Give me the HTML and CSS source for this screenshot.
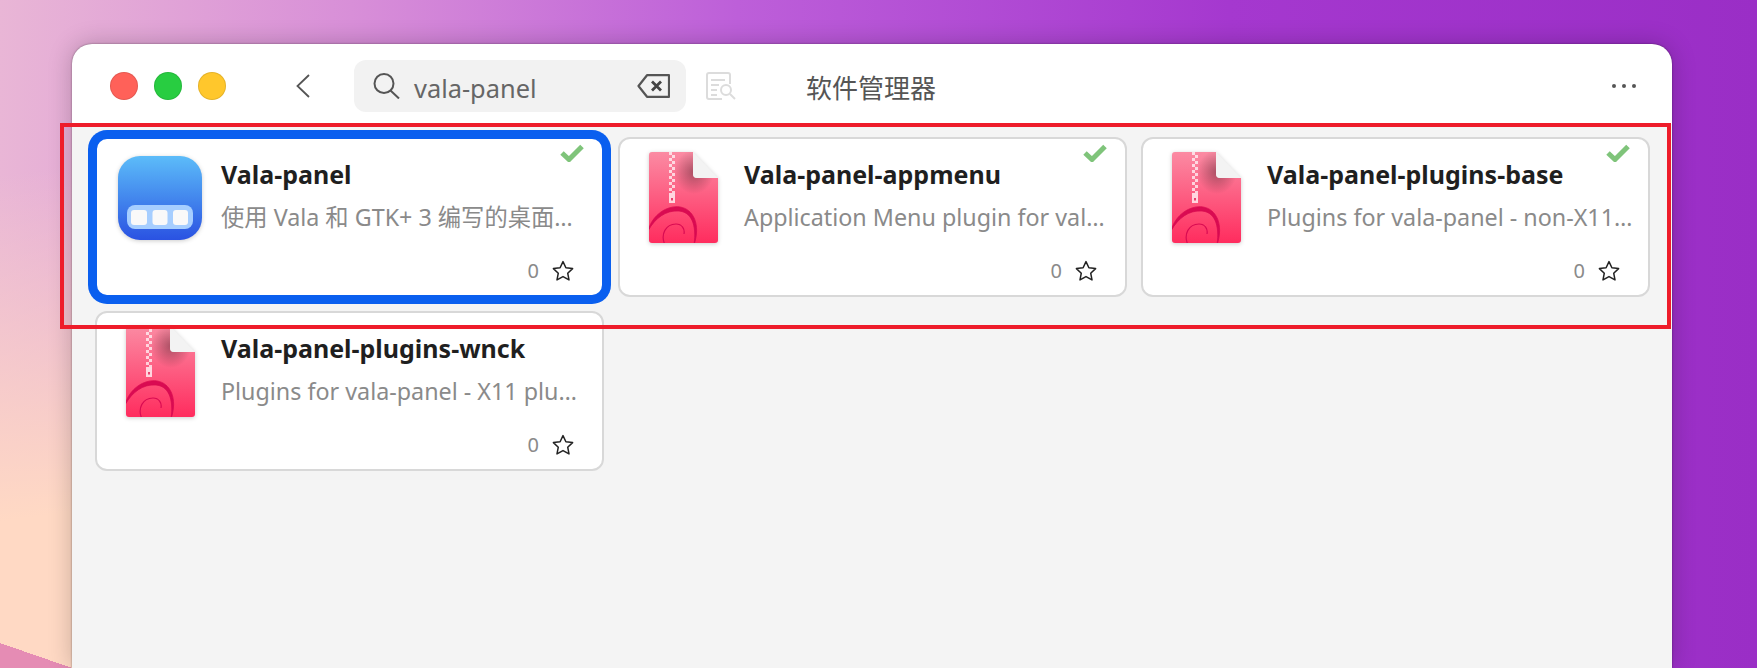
FILE: index.html
```html
<!DOCTYPE html>
<html lang="zh-CN">
<head>
  <meta charset="UTF-8" />
  <meta name="viewport" content="width=device-width, initial-scale=1.0"/>
  <title>软件管理器</title>
  <link rel="stylesheet" href="styles.css">
</head>
<body>

  <svg class="defs" width="0" height="0">
    <defs>
      <linearGradient id="deb-fill" x1="0" y1="0" x2="0" y2="1">
        <stop offset="0" stop-color="#fb8ba3"/>
        <stop offset="1" stop-color="#ff2c5e"/>
      </linearGradient>
      <radialGradient id="fold-shade" cx="0.5" cy="0.5" r="0.5">
        <stop offset="0" stop-color="#000" stop-opacity="0.32"/>
        <stop offset="1" stop-color="#000" stop-opacity="0"/>
      </radialGradient>
      <linearGradient id="app-fill" x1="0" y1="0" x2="0" y2="1">
        <stop offset="0" stop-color="#5cbcf9"/>
        <stop offset="1" stop-color="#2a52e2"/>
      </linearGradient>
      <clipPath id="deb-clip">
        <path d="M3 0H44V22Q44 26 48 26H69V88Q69 91 66 91H3Q0 91 0 88V3Q0 0 3 0Z"/>
      </clipPath>
      <symbol id="deb" viewBox="0 0 69 91">
        <path d="M3 0H44V22Q44 26 48 26H69V88Q69 91 66 91H3Q0 91 0 88V3Q0 0 3 0Z" fill="url(#deb-fill)"/>
        <g clip-path="url(#deb-clip)">
          <ellipse cx="45" cy="20" rx="20" ry="22" fill="url(#fold-shade)"/>
          <path d="M-1 79C3 63 18 53 31 55C44 57 52 72 45 93C48 72 42 60 30 59C17 58 6 66 -1 79Z" fill="#d90b52" stroke="#d90b52" stroke-width="0.800"/>
          <path d="M16 93C11 82 17 72 27 72C33 72 36 77 35 82" fill="none" stroke="#d90b52" stroke-width="1.200"/>
          <path d="M21.500 0V41M24.500 3V41" fill="none" stroke="#fff" stroke-opacity="0.7" stroke-width="3" stroke-dasharray="3 3"/>
        </g>
        <rect x="20" y="41" width="6" height="10" fill="#fff" fill-opacity="0.75"/>
        <rect x="22" y="46" width="2" height="2.500" fill="#e8436f"/>
        <path d="M44 0L69 26H48Q44 26 44 22Z" fill="#f3f3f3"/>
      </symbol>
      <symbol id="star" viewBox="0 0 22 22">
        <path d="M11 1.600L13.900 7.800L20.600 8.600L15.700 13.200L17 19.900L11 16.600L5 19.900L6.300 13.200L1.400 8.600L8.100 7.800Z" fill="none" stroke="#222" stroke-width="1.500" stroke-linejoin="round"/>
      </symbol>
      <symbol id="check" viewBox="0 0 24 18">
        <path d="M2 9L9 15.500L22 2.500" fill="none" stroke="#7fc47a" stroke-width="5"/>
      </symbol>
    </defs>
  </svg>

  <div class="window">
    <div class="titlebar">
      <div class="traffic">
        <span class="light light-red"></span>
        <span class="light light-green"></span>
        <span class="light light-yellow"></span>
      </div>
      <svg class="back" width="14" height="24" viewBox="0 0 14 24">
        <path d="M13 1L1.500 12L13 23" fill="none" stroke="#555" stroke-width="1.800"/>
      </svg>
      <div class="search-box">
        <svg class="search-icon" width="27" height="26" viewBox="0 0 27 26">
          <circle cx="11" cy="10.500" r="9.500" fill="none" stroke="#555" stroke-width="2"/>
          <path d="M17.500 17.500L26 25.500" fill="none" stroke="#555" stroke-width="2"/>
        </svg>
        <div class="search-text">vala-panel</div>
        <svg class="clear-icon" width="33" height="24" viewBox="0 0 33 24">
          <path d="M10 1.200H32V22.800H10L1.500 12Z" fill="none" stroke="#555" stroke-width="2.200" stroke-linejoin="round"/>
          <path d="M15 7.500L24 16.500M24 7.500L15 16.500" fill="none" stroke="#444" stroke-width="2.800"/>
        </svg>
      </div>
      <svg class="file-search" width="30" height="28" viewBox="0 0 30 28">
        <path d="M24 12V3Q24 1 22 1H3Q1 1 1 3V25Q1 27 3 27H16" fill="none" stroke="#dcdcdc" stroke-width="2"/>
        <path d="M5 8H19M5 13H13M5 18H11M5 23H11" fill="none" stroke="#dcdcdc" stroke-width="2"/>
        <circle cx="20" cy="18" r="5" fill="none" stroke="#dcdcdc" stroke-width="2"/>
        <path d="M24 22L29 27" fill="none" stroke="#dcdcdc" stroke-width="2"/>
      </svg>
      <div class="app-title">软件管理器</div>
      <div class="more">
        <span class="dot"></span>
        <span class="dot"></span>
        <span class="dot"></span>
      </div>
    </div>

    <div class="content">
      <div class="card card-selected">
        <svg class="check" width="24" height="18"><use href="#check"/></svg>
        <div class="icon-slot">
          <svg class="app-icon" width="84" height="84" viewBox="0 0 84 84">
            <rect width="84" height="84" rx="22" fill="url(#app-fill)"/>
            <rect x="9" y="49" width="66" height="24" rx="8" fill="#a6ceff"/>
            <rect x="13" y="54" width="16" height="15" rx="3" fill="#f9f9f9"/>
            <rect x="34.500" y="54" width="15" height="15" rx="3" fill="#f9f9f9"/>
            <rect x="55" y="54" width="15" height="15" rx="3" fill="#f9f9f9"/>
          </svg>
        </div>
        <div class="card-body">
          <div class="pkg-name">Vala-panel</div>
          <div class="pkg-desc">使用 Vala 和 GTK+ 3 编写的桌面…</div>
          <div class="card-footer">
            <span class="count">0</span>
            <svg class="star" width="22" height="22"><use href="#star"/></svg>
          </div>
        </div>
      </div>

      <div class="card">
        <svg class="check" width="24" height="18"><use href="#check"/></svg>
        <div class="icon-slot">
          <svg class="deb-icon" width="69" height="91"><use href="#deb"/></svg>
        </div>
        <div class="card-body">
          <div class="pkg-name">Vala-panel-appmenu</div>
          <div class="pkg-desc">Application Menu plugin for val…</div>
          <div class="card-footer">
            <span class="count">0</span>
            <svg class="star" width="22" height="22"><use href="#star"/></svg>
          </div>
        </div>
      </div>

      <div class="card">
        <svg class="check" width="24" height="18"><use href="#check"/></svg>
        <div class="icon-slot">
          <svg class="deb-icon" width="69" height="91"><use href="#deb"/></svg>
        </div>
        <div class="card-body">
          <div class="pkg-name">Vala-panel-plugins-base</div>
          <div class="pkg-desc">Plugins for vala-panel - non-X11…</div>
          <div class="card-footer">
            <span class="count">0</span>
            <svg class="star" width="22" height="22"><use href="#star"/></svg>
          </div>
        </div>
      </div>

      <div class="card">
        <div class="icon-slot">
          <svg class="deb-icon" width="69" height="91"><use href="#deb"/></svg>
        </div>
        <div class="card-body">
          <div class="pkg-name">Vala-panel-plugins-wnck</div>
          <div class="pkg-desc">Plugins for vala-panel - X11 plu…</div>
          <div class="card-footer">
            <span class="count">0</span>
            <svg class="star" width="22" height="22"><use href="#star"/></svg>
          </div>
        </div>
      </div>
    </div>
  </div>

  <div class="annotation"></div>

</body>
</html>
```

FILE: styles.css
```css
html, body {
  height: 100%;
}
body {
  margin: 0;
  padding: 44px 85px 0 72px;
  box-sizing: border-box;
  overflow: hidden;
  position: relative;
  font-family: "Noto Sans", "Noto Sans CJK SC", sans-serif;
  background-color: #d9a0dc;
  background-image:
    linear-gradient(to top right, #e58cb4 50%, transparent 50%),
    linear-gradient(172deg, rgba(255, 217, 196, 0) 25%, #ffd9c4 75%),
    linear-gradient(90deg, #e9b6d6 0%, #d88fd8 20%, #bd5fd9 42%, #a538cf 70%, #9a2ec6 100%);
  background-repeat: no-repeat;
  background-size: 72px 25px, 200px 100%, 100% 100%;
  background-position: 0 643px, 0 0, 0 0;
}
.defs {
  position: absolute;
}
.window {
  height: 100%;
  display: flex;
  flex-direction: column;
  background-color: #fff;
  border-radius: 20px 20px 0 0;
  box-shadow: 0 0 24px rgba(0, 0, 0, 0.22), 0 0 2px rgba(0, 0, 0, 0.45);
}
.titlebar {
  height: 80px;
  flex: none;
  display: flex;
  align-items: center;
  padding: 4px 36px 0 38px;
  box-sizing: border-box;
}
.traffic {
  display: flex;
  gap: 16px;
}
.light {
  width: 28px;
  height: 28px;
  border-radius: 14px;
  box-sizing: border-box;
  border: 1px solid rgba(0, 0, 0, 0.1);
}
.light-red {
  background-color: #ff6159;
}
.light-green {
  background-color: #28cd41;
}
.light-yellow {
  background-color: #ffc72c;
}
.back {
  margin-left: 70px;
}
.search-box {
  width: 332px;
  height: 52px;
  margin-left: 44px;
  display: flex;
  align-items: center;
  padding: 0 16px 0 19px;
  box-sizing: border-box;
  background-color: #f2f2f2;
  border-radius: 12px;
}
.search-text {
  flex: 1;
  margin-left: 14px;
  padding-top: 4px;
  font-size: 25.4px;
  color: #666;
}
.file-search {
  margin-left: 20px;
}
.app-title {
  margin-left: 70px;
  padding-top: 1px;
  font-size: 26px;
  color: #555;
}
.more {
  margin-left: auto;
  display: flex;
  gap: 6px;
}
.dot {
  width: 4px;
  height: 4px;
  border-radius: 2px;
  background-color: #555;
}
.content {
  flex: 1;
  display: grid;
  grid-template-columns: repeat(3, minmax(0, 1fr));
  grid-auto-rows: 160px;
  gap: 14px;
  align-content: start;
  padding: 13px 22px 0 23px;
  background-color: #f4f4f4;
}
.card {
  position: relative;
  display: flex;
  padding: 12px 28px 13px 21px;
  box-sizing: border-box;
  background-color: #fff;
  border: 2px solid #d8d8d8;
  border-radius: 12px;
}
.card-selected {
  border-color: #0a5fef;
  box-shadow: 0 0 0 7px #0a5fef;
}
.check {
  position: absolute;
  top: 5px;
  right: 18px;
}
.icon-slot {
  width: 84px;
  height: 92px;
  flex: none;
  display: flex;
  align-items: center;
  justify-content: center;
  margin-right: 19px;
}
.app-icon {
  margin-top: 2px;
  filter: drop-shadow(0 1px 2px rgba(0, 0, 0, 0.2));
}
.deb-icon {
  filter: drop-shadow(0 1px 2px rgba(0, 0, 0, 0.2));
}
.card-body {
  flex: 1;
  min-width: 0;
  display: flex;
  flex-direction: column;
}
.pkg-name {
  margin-top: 7px;
  font-size: 25px;
  font-weight: bold;
  line-height: 32px;
  color: #1f1f1f;
  white-space: nowrap;
}
.pkg-desc {
  margin-top: 11px;
  font-size: 23.3px;
  line-height: 32px;
  color: #8a8a8a;
  white-space: nowrap;
}
.card-footer {
  margin-top: auto;
  display: flex;
  align-items: center;
  justify-content: flex-end;
  gap: 13px;
}
.count {
  font-size: 20px;
  line-height: 22px;
  color: #8a8a8a;
}
.annotation {
  position: absolute;
  left: 60px;
  top: 123px;
  width: 1611px;
  height: 206px;
  box-sizing: border-box;
  border: 4px solid #ee1c2a;
}
```
